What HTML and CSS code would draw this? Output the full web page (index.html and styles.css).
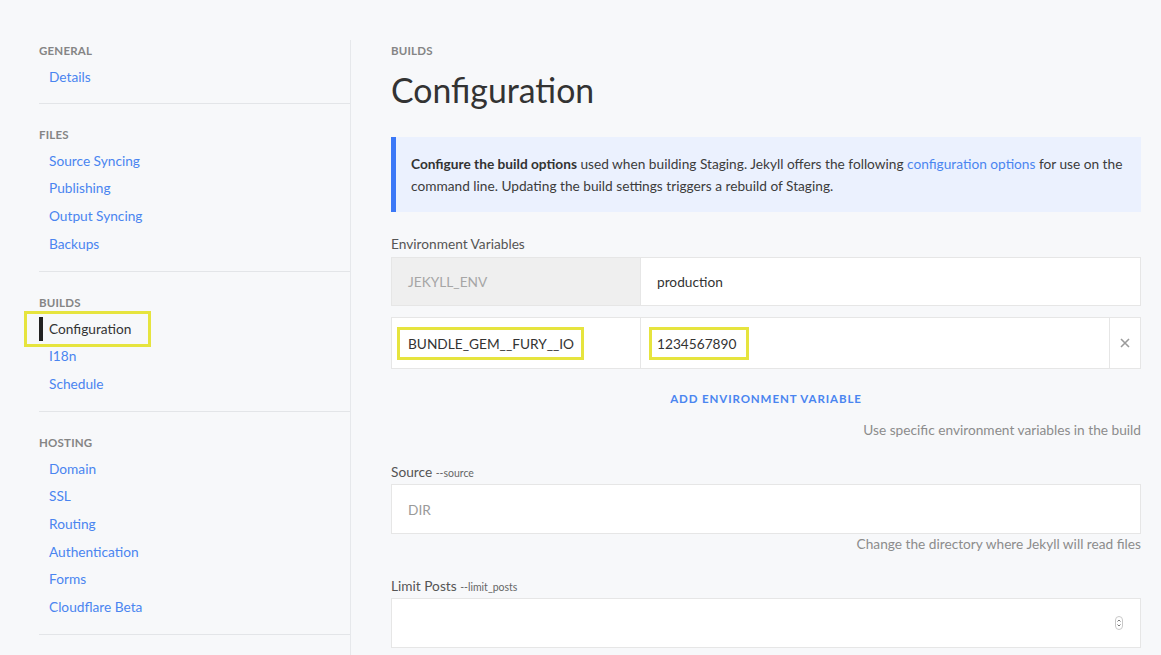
FILE: index.html
```html
<!DOCTYPE html>
<html>
<head>
<meta charset="utf-8">
<link rel="stylesheet" href="styles.css">
</head>
<body>
<div class="layout">
  <nav class="sidebar">
    <div class="section first">
      <div class="section-title">General</div>
      <a class="nav-link" href="#">Details</a>
    </div>
    <div class="section">
      <div class="section-title">Files</div>
      <a class="nav-link" href="#">Source Syncing</a>
      <a class="nav-link" href="#">Publishing</a>
      <a class="nav-link" href="#">Output Syncing</a>
      <a class="nav-link" href="#">Backups</a>
    </div>
    <div class="section">
      <div class="section-title">Builds</div>
      <a class="nav-link active highlight" href="#">Configuration</a>
      <a class="nav-link" href="#">I18n</a>
      <a class="nav-link" href="#">Schedule</a>
    </div>
    <div class="section">
      <div class="section-title">Hosting</div>
      <a class="nav-link" href="#">Domain</a>
      <a class="nav-link" href="#">SSL</a>
      <a class="nav-link" href="#">Routing</a>
      <a class="nav-link" href="#">Authentication</a>
      <a class="nav-link" href="#">Forms</a>
      <a class="nav-link" href="#">Cloudflare Beta</a>
    </div>
  </nav>
  <main class="main">
    <div class="eyebrow">Builds</div>
    <h1 class="title">Configuration</h1>
    <div class="notice">
      <p><strong>Configure the build options</strong> used when building Staging. Jekyll offers the following <a href="#">configuration options</a> for use on the command line. Updating the build settings triggers a rebuild of Staging.</p>
    </div>

    <div class="field-label">Environment Variables</div>
    <div class="env-row">
      <div class="env-key locked">JEKYLL_ENV</div>
      <div class="env-value">production</div>
    </div>
    <div class="env-row second">
      <div class="env-key"><span class="mark">BUNDLE_GEM__FURY__IO</span></div>
      <div class="env-value"><span class="mark">1234567890</span></div>
      <div class="env-remove">
        <svg width="12" height="12" viewBox="0 0 12 12"><path d="M2 2L10 10M10 2L2 10" stroke="#9b9b9b" stroke-width="1.6" fill="none"/></svg>
      </div>
    </div>
    <div class="add-row"><a class="add-link" href="#">Add Environment Variable</a></div>
    <div class="help">Use specific environment variables in the build</div>

    <div class="field-label spaced">Source <span class="flag">--source</span></div>
    <div class="input"><span class="placeholder">DIR</span></div>
    <div class="help">Change the directory where Jekyll will read files</div>

    <div class="field-label spaced2">Limit Posts <span class="flag">--limit_posts</span></div>
    <div class="input number">
      <span class="spinner">
        <svg width="8" height="14" viewBox="0 0 8 14"><rect x="0.5" y="0.5" width="7" height="13" rx="3.5" fill="#fff" stroke="#c8c8c8"/><path d="M2.5 5.5L4 4L5.5 5.5M2.5 8.5L4 10L5.5 8.5" stroke="#666" stroke-width="0.9" fill="none"/></svg>
      </span>
    </div>
  </main>
</div>
</body>
</html>
```
FILE: styles.css
```css
*, *::before, *::after { box-sizing: border-box; }
html, body { margin: 0; padding: 0; }
body {
  background: #f7f8fa;
  font-family: "Lato", "Noto Sans", sans-serif;
  font-size: 13.7px;
  color: #393939;
  height: 655px;
  overflow: hidden;
}
a { text-decoration: none; }

.layout {
  display: flex;
  align-items: flex-start;
}

.sidebar {
  width: 351px;
  flex: none;
  margin-top: 40px;
  padding-left: 39px;
  border-right: 1px solid #e6e8eb;
  min-height: 620px;
}
.section {
  display: flex;
  flex-direction: column;
  padding: 21px 0 13px;
  border-bottom: 1px solid #e3e5e8;
}
.section.first { padding: 1px 0 12px; }
.section-title {
  font-size: 11.5px;
  font-weight: 700;
  text-transform: uppercase;
  color: #858585;
  line-height: 20px;
  letter-spacing: 0.2px;
  margin-bottom: 2px;
}
.nav-link {
  display: block;
  align-self: flex-start;
  position: relative;
  color: #4a85f0;
  line-height: 27.7px;
  padding-left: 10px;
}
.nav-link.active { color: #333; }
.nav-link.active::before {
  content: "";
  position: absolute;
  left: 0;
  top: 2px;
  width: 4px;
  height: 24px;
  background: #222;
}
.nav-link.highlight::after {
  content: "";
  position: absolute;
  left: -15px;
  top: -4px;
  width: 127px;
  height: 36px;
  border: 3px solid #e6e43e;
}

.main {
  flex: 1;
  padding: 41px 20px 0 40px;
}
.eyebrow {
  font-size: 11.5px;
  font-weight: 700;
  text-transform: uppercase;
  color: #858585;
  line-height: 20px;
  letter-spacing: 0.2px;
}
.title {
  margin: 8px 0 0;
  font-size: 33.8px;
  font-weight: 400;
  color: #333;
  line-height: 42px;
}
.notice {
  margin-top: 26px;
  background: #ebf1fe;
  border-left: 5px solid #3b78f7;
  padding: 16px 18px 15px 15px;
}
.notice p {
  margin: 0;
  line-height: 22px;
  color: #3c3c3c;
}
.notice strong { font-weight: 700; color: #333; }
.notice a { color: #4a85f0; }

.field-label {
  margin-top: 24px;
  line-height: 16px;
  color: #555;
}
.field-label.spaced { margin-top: 26px; }
.field-label.spaced2 { margin-top: 26px; }
.flag { font-size: 10.5px; color: #666; }

.env-row {
  display: flex;
  margin-top: 5px;
  height: 49px;
  border: 1px solid #e6e6e6;
  background: #fff;
}
.env-row.second { margin-top: 11px; height: 52px; }
.env-key {
  width: 249px;
  flex: none;
  display: flex;
  align-items: center;
  padding-left: 16px;
  border-right: 1px solid #e6e6e6;
  color: #333;
}
.env-key.locked { background: #efefef; color: #a6a6a6; }
.env-value {
  flex: 1;
  display: flex;
  align-items: center;
  padding-left: 16px;
  color: #333;
}
.env-row.second .env-key { padding-left: 5px; }
.env-row.second .env-value { padding-left: 8px; }
.env-remove {
  width: 31px;
  flex: none;
  display: flex;
  align-items: center;
  justify-content: center;
  border-left: 1px solid #e6e6e6;
}
.mark {
  display: inline-block;
  border: 3px solid #e6e43e;
  padding: 4px 7px 4px 8px;
  line-height: 19px;
}
.env-value .mark { padding: 4px 10px 4px 5px; }

.add-row {
  text-align: center;
  margin-top: 21px;
  line-height: 16px;
}
.add-link {
  font-size: 11.5px;
  font-weight: 700;
  letter-spacing: 0.9px;
  text-transform: uppercase;
  color: #4a85f0;
}
.help {
  text-align: right;
  color: #8c8c8c;
  margin-top: 15px;
  line-height: 16px;
}
.input + .help { margin-top: 2px; }

.input {
  margin-top: 3px;
  height: 50px;
  background: #fff;
  border: 1px solid #e6e6e6;
  display: flex;
  align-items: center;
  padding-left: 16px;
}
.placeholder { color: #9a9a9a; }
.input.number { justify-content: flex-end; padding-right: 17px; }
.spinner { display: flex; }
```
